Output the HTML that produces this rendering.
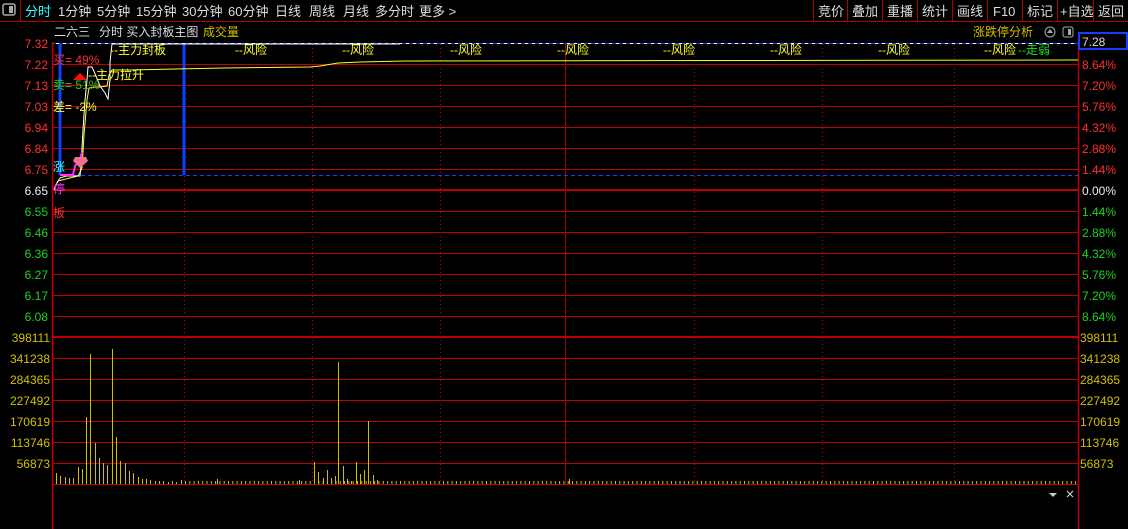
<!DOCTYPE html>
<html><head><meta charset="utf-8"><style>
html,body{margin:0;padding:0;background:#000;width:1128px;height:529px;overflow:hidden}
svg{display:block}
text{font-family:"Liberation Sans","Noto Sans CJK SC",sans-serif}
</style></head><body>
<svg width="1128" height="529" xmlns="http://www.w3.org/2000/svg">
<rect width="1128" height="529" fill="#000"/>
<line x1="0" y1="21.5" x2="1128" y2="21.5" stroke="#b00000"/>
<line x1="20.5" y1="0" x2="20.5" y2="21" stroke="#b00000"/>
<rect x="3" y="4" width="12" height="11" rx="2" fill="none" stroke="#aaa" stroke-width="1.5"/>
<rect x="9" y="6" width="4" height="7" fill="#aaa"/>
<g font-size="13" fill="#ddd">
<text x="25" y="16" fill="#3ff">分时</text>
<text x="58" y="16">1分钟</text>
<text x="97" y="16">5分钟</text>
<text x="136" y="16">15分钟</text>
<text x="182" y="16">30分钟</text>
<text x="228" y="16">60分钟</text>
<text x="275" y="16">日线</text>
<text x="309" y="16">周线</text>
<text x="343" y="16">月线</text>
<text x="375" y="16">多分时</text>
<text x="419" y="16">更多 &gt;</text>
<text x="818" y="16">竞价</text>
<text x="852" y="16">叠加</text>
<text x="887" y="16">重播</text>
<text x="922" y="16">统计</text>
<text x="957" y="16">画线</text>
<text x="993" y="16">F10</text>
<text x="1027" y="16">标记</text>
<text x="1060" y="16">+自选</text>
<text x="1098" y="16">返回</text>
</g>
<g stroke="#b00000">
<line x1="813.5" y1="0" x2="813.5" y2="21"/><line x1="847.5" y1="0" x2="847.5" y2="21"/>
<line x1="882.5" y1="0" x2="882.5" y2="21"/><line x1="917.5" y1="0" x2="917.5" y2="21"/>
<line x1="952.5" y1="0" x2="952.5" y2="21"/><line x1="987.5" y1="0" x2="987.5" y2="21"/>
<line x1="1022.5" y1="0" x2="1022.5" y2="21"/><line x1="1057.5" y1="0" x2="1057.5" y2="21"/>
<line x1="1093.5" y1="0" x2="1093.5" y2="21"/>
</g>
<g font-size="12">
<text x="54" y="36" fill="#ddd">二六三</text>
<text x="99" y="36" fill="#ddd">分时 买入封板主图</text>
<text x="203" y="36" fill="#d0c000">成交量</text>
<text x="973" y="36" fill="#d0c000">涨跌停分析</text>
</g>
<circle cx="1050" cy="32" r="5" fill="none" stroke="#aaa"/><path d="M1047 33 L1050 29 L1053 33Z" fill="#aaa"/>
<rect x="1063" y="27" width="10" height="10" rx="2" fill="none" stroke="#aaa"/><rect x="1068" y="29" width="3" height="6" fill="#aaa"/>
<!-- grid -->
<path stroke="#c00000" stroke-width="1" fill="none" d="M52 64.5H1078M52 85.5H1078M52 106.5H1078M52 127.5H1078M52 148.5H1078M52 169.5H1078M52 211.5H1078M52 232.5H1078M52 253.5H1078M52 274.5H1078M52 295.5H1078M52 316.5H1078M52 358.5H1078M52 379.5H1078M52 400.5H1078M52 421.5H1078M52 442.5H1078M52 463.5H1078M52 484.5H1078"/>
<path stroke="#c00000" stroke-width="2" fill="none" d="M52 190H1078M52 337H1078"/>
<path stroke="#c00000" stroke-width="1" stroke-dasharray="1,3" fill="none" d="M184.5 44V484M312.5 44V484M440.5 44V484M694.5 44V484M822.5 44V484M954.5 44V484"/>
<path stroke="#a00000" stroke-width="1" fill="none" d="M565.5 44V484"/>
<line x1="52.5" y1="42" x2="52.5" y2="529" stroke="#c00000" stroke-width="1.5"/>
<line x1="1078.5" y1="42" x2="1078.5" y2="529" stroke="#c00000" stroke-width="1.5"/>
<line x1="60" y1="43" x2="60" y2="175" stroke="#1040ff" stroke-width="3"/>
<line x1="184" y1="43" x2="184" y2="175" stroke="#1040ff" stroke-width="3"/>
<line x1="60" y1="175.5" x2="1078" y2="175.5" stroke="#1a3cff" stroke-dasharray="4,3"/>
<line x1="52" y1="43.5" x2="1078" y2="43.5" stroke="#fff"/>
<line x1="52" y1="43.5" x2="1078" y2="43.5" stroke="#1a3cff" stroke-dasharray="4,3"/>
<polyline fill="none" stroke="#ffff30" points="55,186 58,181 62,180 70,178 78,176 82,168 84,135 87,100 89,88 95,87 100,87 107,86 109,75 112,70 130,70 175,69 225,68 310,67 320,66 338,63 360,62 405,61 1078,60"/>
<polyline fill="none" stroke="#fff" points="54,190 57,183 60,178 66,176 80,176 81,166 83,130 85,100 87,80 88,67 92,67 96,76 100,86 105,93 108,99 110,80 110,62 112,44 400,44"/>
<polyline fill="none" stroke="#ff30ff" stroke-width="2" points="60,175 73,175 75,166 80,160 82,152"/>
<path d="M75 157 L86 157 L88 161 L80 168 L73 161Z" fill="#f07090"/>
<path d="M80 73 L87 80 L73 80Z" fill="#ff1010"/>
<g font-size="12">
<text x="53" y="64" fill="#ff3030">买= 49%</text>
<text x="53" y="89" fill="#20d020">卖= 51%</text>
<text x="53" y="111" fill="#ffff30">差= -2%</text>
<text x="88" y="79" fill="#ffff30">--主力拉升</text>
<text x="110" y="54" fill="#ffff30">--主力封板</text>
<text x="53" y="171" fill="#30ffff">涨</text>
<text x="53" y="193" fill="#ff30ff">停</text>
<text x="53" y="217" fill="#ff3030">板</text>
<g fill="#ffff30">
<text x="235" y="54">--风险</text><text x="342" y="54">--风险</text><text x="450" y="54">--风险</text>
<text x="557" y="54">--风险</text><text x="663" y="54">--风险</text><text x="770" y="54">--风险</text>
<text x="878" y="54">--风险</text><text x="984" y="54">--风险</text>
</g>
<text x="1018" y="54" fill="#20e020">--走弱</text>
</g>
<rect x="1079" y="33" width="48" height="16" fill="#000" stroke="#1a3cff" stroke-width="2"/>
<text x="1082" y="46" font-size="12" fill="#ddd">7.28</text>
<g font-size="12" text-anchor="end">
<g fill="#ff3030"><text x="48" y="48">7.32</text><text x="48" y="69">7.22</text><text x="48" y="90">7.13</text><text x="48" y="111">7.03</text><text x="48" y="132">6.94</text><text x="48" y="153">6.84</text><text x="48" y="174">6.75</text></g>
<text x="48" y="195" fill="#eee">6.65</text>
<g fill="#20d020"><text x="48" y="216">6.55</text><text x="48" y="237">6.46</text><text x="48" y="258">6.36</text><text x="48" y="279">6.27</text><text x="48" y="300">6.17</text><text x="48" y="321">6.08</text></g>
<g fill="#d0c000"><text x="50" y="342">398111</text><text x="50" y="363">341238</text><text x="50" y="384">284365</text><text x="50" y="405">227492</text><text x="50" y="426">170619</text><text x="50" y="447">113746</text><text x="50" y="468">56873</text></g>
</g>
<g font-size="12">
<g fill="#ff3030"><text x="1082" y="69">8.64%</text><text x="1082" y="90">7.20%</text><text x="1082" y="111">5.76%</text><text x="1082" y="132">4.32%</text><text x="1082" y="153">2.88%</text><text x="1082" y="174">1.44%</text></g>
<text x="1082" y="195" fill="#eee">0.00%</text>
<g fill="#20d020"><text x="1082" y="216">1.44%</text><text x="1082" y="237">2.88%</text><text x="1082" y="258">4.32%</text><text x="1082" y="279">5.76%</text><text x="1082" y="300">7.20%</text><text x="1082" y="321">8.64%</text></g>
<g fill="#d0c000"><text x="1080" y="342">398111</text><text x="1080" y="363">341238</text><text x="1080" y="384">284365</text><text x="1080" y="405">227492</text><text x="1080" y="426">170619</text><text x="1080" y="447">113746</text><text x="1080" y="468">56873</text></g>
</g>
<!-- volume -->
<line x1="185" y1="482.5" x2="1076" y2="482.5" stroke="#d0c000" stroke-width="3" stroke-dasharray="1,3.3"/>
<path stroke="#d0c000" stroke-width="1" fill="none" d="M56.5 484V473M60.5 484V476M65.5 484V477M69.5 484V478M73.5 484V478M78.5 484V467M82.5 484V469M86.5 484V417M90.5 484V354M95.5 484V443M99.5 484V458M103.5 484V463M107.5 484V465M112.5 484V349M116.5 484V437M120.5 484V461M125.5 484V463M129.5 484V471M133.5 484V473M138.5 484V477M142.5 484V479M146.5 484V479M150.5 484V480M155.5 484V481M159.5 484V481M163.5 484V481M168.5 484V482M172.5 484V481M176.5 484V482M181.5 484V480M314.5 484V462M318.5 484V472M323.5 484V478M327.5 484V470M331.5 484V478M335.5 484V476M338.5 484V362M343.5 484V466M347.5 484V479M351.5 484V481M356.5 484V462M360.5 484V474M364.5 484V470M368.5 484V421M373.5 484V475M377.5 484V480M569.5 484V479M217.5 484V479M299.5 484V480"/>
<path d="M1049 493 L1057 493 L1053 497Z" fill="#ccc"/>
<path d="M1067 491 L1073 497 M1073 491 L1067 497" stroke="#ccc" stroke-width="1.2"/>
</svg>
</body></html>
